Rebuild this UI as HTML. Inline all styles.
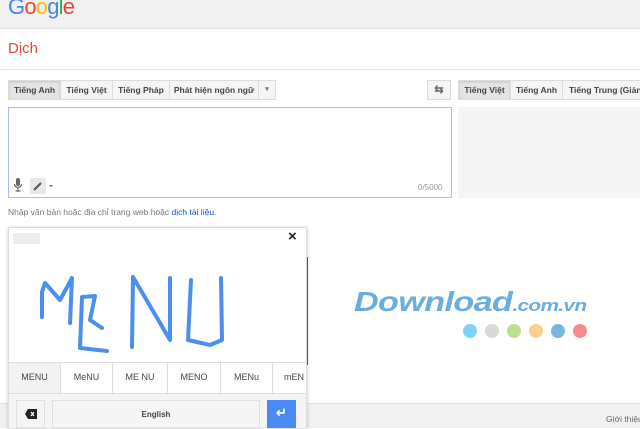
<!DOCTYPE html>
<html><head><meta charset="utf-8"><style>
*{margin:0;padding:0;box-sizing:border-box}
body{width:640px;height:428px;overflow:hidden;background:#fff;font-family:"Liberation Sans",Arial,sans-serif;position:relative}
.abs{position:absolute}
.btn{position:absolute;top:80px;height:20px;border:1px solid #dcdcdc;background:#f5f5f5;font-size:8.5px;font-weight:bold;color:#444;line-height:18px;text-align:center;white-space:nowrap;overflow:hidden}
.sel{background:#e4e4e4;box-shadow:inset 0 1px 2px rgba(0,0,0,.15)}
.sug{position:absolute;top:363px;height:30px;border-right:1px solid #ddd;font-size:9px;color:#444;line-height:29px;text-align:center;background:#fff}
</style></head><body>
<div class="abs" style="left:0;top:0;width:640px;height:29px;background:#f1f1f1;border-bottom:1px solid #e5e5e5"></div>
<div class="abs" style="left:8px;top:-6px;font-size:22px;letter-spacing:-0.8px"><span style="color:#4285f4">G</span><span style="color:#ea4335">o</span><span style="color:#fbbc05">o</span><span style="color:#4285f4">g</span><span style="color:#34a853">l</span><span style="color:#ea4335">e</span></div>
<div class="abs" style="left:8px;top:40px;font-size:15px;color:#dd4b39">Dịch</div>
<div class="abs" style="left:0;top:69px;width:640px;height:1px;background:#e5e5e5"></div>

<div class="btn sel" style="left:8px;width:53px">Tiếng Anh</div>
<div class="btn" style="left:60px;width:53px">Tiếng Việt</div>
<div class="btn" style="left:112px;width:58px">Tiếng Pháp</div>
<div class="btn" style="left:169px;width:90px">Phát hiện ngôn ngữ</div>
<div class="btn" style="left:258px;width:18px;font-size:7px;color:#777">▾</div>

<div class="btn" style="left:427px;width:24px;font-size:11px;color:#666">⇆</div>
<div class="btn sel" style="left:458px;width:53px">Tiếng Việt</div>
<div class="btn" style="left:510px;width:53px">Tiếng Anh</div>
<div class="btn" style="left:562px;width:90px;text-align:left;padding-left:6px">Tiếng Trung (Giản</div>

<div class="abs" style="left:8px;top:107px;width:444px;height:91px;border:1px solid #a4c0f4"></div>
<div class="abs" style="left:418px;top:183px;font-size:8px;color:#999">0/5000</div>
<svg class="abs" style="left:14px;top:178px" width="44" height="16">
<rect x="2" y="0" width="4" height="8" rx="2" fill="#666"/><path d="M0.5 6 a3.5 3.5 0 0 0 7 0 M4 9.5 v3 M1.5 13 h5" stroke="#666" fill="none" stroke-width="1.2"/>
<rect x="16" y="0" width="16" height="16" fill="#e8e8e8"/><path d="M20 12 L27 5" stroke="#555" stroke-width="2"/>
<path d="M35 7 h4 l-2 2z" fill="#666"/>
</svg>
<div class="abs" style="left:458px;top:107px;width:182px;height:91px;background:#f5f5f5"></div>
<div class="abs" style="left:8px;top:207px;font-size:8.5px;color:#777">Nhập văn bản hoặc địa chỉ trang web hoặc <span style="color:#1a55b8">dịch tài liệu</span>.</div>

<div class="abs" style="left:304px;top:257px;width:4px;height:108px;background:#4a5a80"></div>

<div class="abs" style="left:0;top:403px;width:640px;height:25px;background:#f1f1f1;border-top:1px solid #e0e0e0"></div>
<div class="abs" style="left:606px;top:414px;font-size:8.5px;color:#666;white-space:nowrap">Giới thiệu</div>

<div class="abs" style="left:354px;top:286px;font-size:28px;font-weight:bold;font-style:italic;color:#6aaee0;letter-spacing:-0.5px;white-space:nowrap;transform:scaleX(1.22);transform-origin:0 0">Download<span style="font-size:17px">.com.vn</span></div>
<svg class="abs" style="left:460px;top:322px" width="135" height="20">
<circle cx="10" cy="9" r="7" fill="#7dd3fa"/><circle cx="32" cy="9" r="7" fill="#d9d9d9"/><circle cx="54" cy="9" r="7" fill="#bde08f"/><circle cx="76" cy="9" r="7" fill="#fcd08c"/><circle cx="98" cy="9" r="7" fill="#7ab5e0"/><circle cx="120" cy="9" r="7" fill="#f58a8f"/>
</svg>

<div class="abs" style="left:8px;top:227px;width:299px;height:201px;background:#fff;border:1px solid #ddd;box-shadow:0 1px 4px rgba(0,0,0,.2)"></div>
<div class="abs" style="left:13px;top:233px;width:27px;height:11px;background:#eee"></div>
<div class="abs" style="left:288px;top:228px;font-size:15px;font-weight:bold;color:#222">×</div>
<svg class="abs" style="left:0;top:0" width="310" height="428">
<g stroke="#4a8ff0" stroke-width="4" fill="none" stroke-linecap="round" stroke-linejoin="round">
<path d="M42 317 L42 292 L45 283 L60 300 L72 278 L70 323"/>
<path d="M82 297 L80 348 L107 351 M82 297 L95 296 L90 320 L102 328"/>
<path d="M132 347 L133 277 L170 340 L170 278"/>
<path d="M191 280 L188 340 L210 345 L222 340 L221 278"/>
</g></svg>
<div class="abs" style="left:9px;top:362px;width:297px;height:1px;background:#ddd"></div>
<div class="sug" style="left:9px;width:52px;background:#f3f3f3">MENU</div>
<div class="sug" style="left:61px;width:52px">MeNU</div>
<div class="sug" style="left:113px;width:55px">ME NU</div>
<div class="sug" style="left:168px;width:53px">MENO</div>
<div class="sug" style="left:221px;width:52px">MENu</div>
<div class="sug" style="left:273px;width:33px;border:none;text-align:left;padding-left:11px;overflow:hidden">mEN</div>
<div class="abs" style="left:9px;top:393px;width:297px;height:35px;background:#f5f5f5;border-top:1px solid #ddd"></div>
<div class="abs" style="left:16px;top:400px;width:29px;height:28px;border:1px solid #e0e0e0;background:#f5f5f5"></div>
<svg class="abs" style="left:25px;top:409px" width="12" height="10"><path d="M3 0 H12 V10 H3 L0 5Z" fill="#222"/><path d="M6 3 l3 4 M9 3 l-3 4" stroke="#fff" stroke-width="1.2"/></svg>
<div class="abs" style="left:52px;top:400px;width:208px;height:28px;border:1px solid #e0e0e0;background:#f5f5f5;font-size:8px;font-weight:bold;color:#444;text-align:center;line-height:28px">English</div>
<div class="abs" style="left:267px;top:400px;width:29px;height:28px;background:#4a8af4;color:#fff;font-size:13px;font-weight:bold;text-align:center;line-height:26px">↵</div>
</body></html>
